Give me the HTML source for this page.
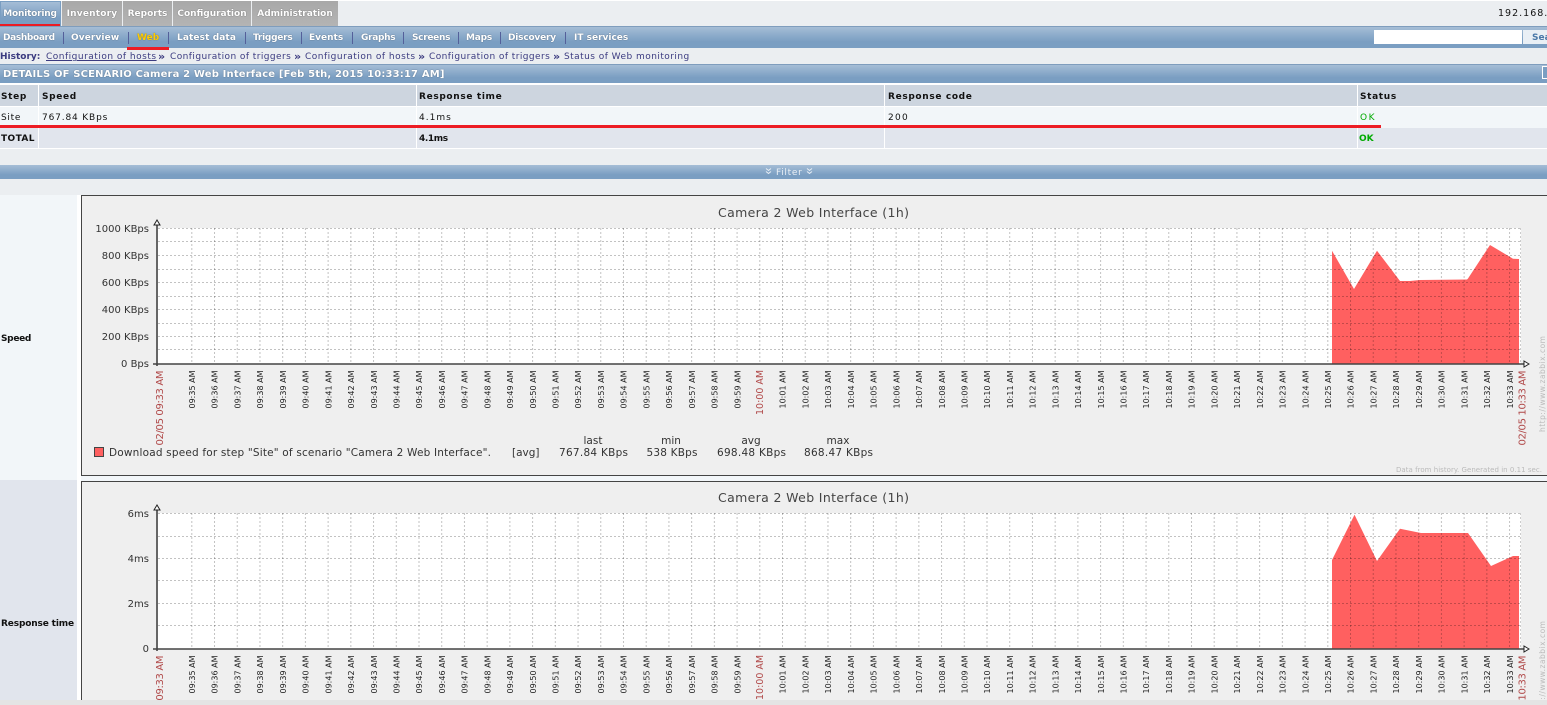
<!DOCTYPE html>
<html><head><meta charset="utf-8"><title>Details of scenario</title>
<style>
html,body{margin:0;padding:0;width:1547px;height:705px;overflow:hidden;background:#ebeef1;font-family:"DejaVu Sans","Liberation Sans",sans-serif;font-size:9px;color:#111}
div,span,a{position:absolute;white-space:nowrap}
.g{background:linear-gradient(#a5bdd6,#7a9ec2 70%)}
.tab{top:2px;height:24px;background:linear-gradient(#a8a8a8,#b4b4b4);color:#fff;font-weight:bold;line-height:24px;font-size:9px;text-align:center;box-sizing:border-box;text-shadow:0 0 1px #555}
.n{top:27px;line-height:23px;color:#fff;font-weight:bold;font-size:9px;text-shadow:0 0 1px #456}
.s{top:32px;width:1px;height:12px;background:#54609a}
.h{top:49px;line-height:17px;color:#3b3b80;font-size:9px;letter-spacing:.43px}
.c{line-height:20px;font-size:9px}
.b{font-weight:bold}
.hd{letter-spacing:.65px}
svg.ch{position:absolute;left:0;top:0;filter:blur(.3px)}
svg text{font-family:"DejaVu Sans","Liberation Sans",sans-serif;fill:#333}
.t text{font-size:8px;fill:#222}
.r{fill:#b04848!important}
</style></head><body>
<div style="left:0;top:0;width:1547px;height:1px;background:#fff"></div>
<div class="g" style="left:0;top:1px;width:61px;height:25px;border:1px solid #7a9ec2;box-sizing:border-box"></div>
<div class="tab" style="left:0;width:60px;background:none;text-shadow:0 0 1px #345;letter-spacing:-.2px">Monitoring</div>
<div style="left:0;top:24px;width:60px;height:2px;background:#ed1c24"></div>
<div class="tab" style="left:62px;top:1px;height:25px;line-height:26px;width:60px;letter-spacing:.2px">Inventory</div>
<div class="tab" style="left:123px;top:1px;height:25px;line-height:26px;width:49px">Reports</div>
<div class="tab" style="left:173px;top:1px;height:25px;line-height:26px;width:78px">Configuration</div>
<div class="tab" style="left:252px;top:1px;height:25px;line-height:26px;width:86px">Administration</div>
<div style="left:1498px;top:8px;font-size:9.5px;letter-spacing:1px;color:#111">192.168.0</div>

<div class="g" style="left:0;top:26px;width:1547px;height:22px;border-top:1px solid #7f9dbd;box-sizing:border-box"></div>
<span class="n" style="left:3px;letter-spacing:-.35px">Dashboard</span><span class="s" style="left:63px"></span>
<span class="n" style="left:71px;letter-spacing:.1px">Overview</span><span class="s" style="left:128px"></span>
<span class="n" style="left:137px;color:#fc0">Web</span><span class="s" style="left:168px"></span>
<span class="n" style="left:177px;letter-spacing:.1px">Latest data</span><span class="s" style="left:245px"></span>
<span class="n" style="left:253px;letter-spacing:-.25px">Triggers</span><span class="s" style="left:301px"></span>
<span class="n" style="left:309px">Events</span><span class="s" style="left:352px"></span>
<span class="n" style="left:361px;letter-spacing:-.3px">Graphs</span><span class="s" style="left:403px"></span>
<span class="n" style="left:412px;letter-spacing:-.3px">Screens</span><span class="s" style="left:458px"></span>
<span class="n" style="left:466px;letter-spacing:-.2px">Maps</span><span class="s" style="left:500px"></span>
<span class="n" style="left:508px;letter-spacing:-.2px">Discovery</span><span class="s" style="left:565px"></span>
<span class="n" style="left:574px">IT services</span>
<div style="left:127px;top:47px;width:42px;height:3px;background:#ed1c24"></div>
<div style="left:1374px;top:30px;width:148px;height:14px;background:#fff"></div>
<div style="left:1523px;top:30px;width:24px;height:14px;background:#e9eff5;color:#4a78a8;font-weight:bold;line-height:16px;text-indent:9px;font-size:9px;overflow:hidden">Search</div>

<span class="h b" style="left:0;letter-spacing:0">History:</span>
<span class="h" style="left:46px;text-decoration:underline;letter-spacing:.5px">Configuration of hosts</span>
<span class="h b" style="left:158px;font-size:11px;top:48px">»</span>
<span class="h" style="left:170px">Configuration of triggers</span>
<span class="h b" style="left:294px;font-size:11px;top:48px">»</span>
<span class="h" style="left:305px;letter-spacing:.5px">Configuration of hosts</span>
<span class="h b" style="left:418px;font-size:11px;top:48px">»</span>
<span class="h" style="left:429px">Configuration of triggers</span>
<span class="h b" style="left:553px;font-size:11px;top:48px">»</span>
<span class="h" style="left:564px;letter-spacing:.46px">Status of Web monitoring</span>

<div class="g" style="left:0;top:64px;width:1547px;height:19px;border-top:1px solid #7f9dbd;box-sizing:border-box"></div>
<span style="left:3px;top:65px;line-height:19px;color:#fff;font-size:10px;font-weight:bold;letter-spacing:.16px;text-shadow:0 0 1px #456">DETAILS OF SCENARIO Camera 2 Web Interface [Feb 5th, 2015 10:33:17 AM]</span>
<div style="left:1542px;top:66px;width:5px;height:13px;border:1px solid #fff;border-right:0;box-sizing:border-box;background:#7a9ec2"></div>

<div style="left:0;top:83px;width:1547px;height:2px;background:#fff"></div>
<div style="left:0;top:85px;width:1547px;height:21px;background:#cdd5df"></div>
<div style="left:0;top:106px;width:1547px;height:22px;background:#f2f6f9;border-top:1px solid #fff;box-sizing:border-box"></div>
<div style="left:0;top:128px;width:1547px;height:20px;background:#e1e5ed"></div>
<div style="left:0;top:148px;width:1547px;height:1px;background:#fff"></div>
<div style="left:38px;top:85px;width:1px;height:63px;background:#fff"></div>
<div style="left:416px;top:85px;width:1px;height:63px;background:#fff"></div>
<div style="left:884px;top:85px;width:1px;height:63px;background:#fff"></div>
<div style="left:1357px;top:85px;width:1px;height:63px;background:#fff"></div>

<span class="c b hd" style="left:1px;top:87px">Step</span>
<span class="c b hd" style="left:42px;top:87px">Speed</span>
<span class="c b hd" style="left:419px;top:87px">Response time</span>
<span class="c b hd" style="left:888px;top:87px">Response code</span>
<span class="c b hd" style="left:1360px;top:87px">Status</span>
<span class="c" style="left:1px;top:108px;letter-spacing:.7px">Site</span>
<span class="c" style="left:42px;top:108px;letter-spacing:.85px">767.84 KBps</span>
<span class="c" style="left:419px;top:108px;letter-spacing:1px">4.1ms</span>
<span class="c" style="left:888px;top:108px;letter-spacing:1.3px">200</span>
<span class="c" style="left:1360px;top:108px;color:#0a0;letter-spacing:1.5px">OK</span>
<span class="c b" style="left:1px;top:129px;letter-spacing:.4px">TOTAL</span>
<span class="c b" style="left:419px;top:129px;letter-spacing:-.4px">4.1ms</span>
<span class="c b" style="left:1359px;top:129px;color:#0a0">OK</span>
<div style="left:0;top:125px;width:1381px;height:3px;background:#ed1c24"></div>

<div class="g" style="left:0;top:165px;width:1547px;height:14px"></div>
<span style="left:776px;top:166px;line-height:14px;color:#e8eef5;font-size:9px;letter-spacing:.7px">Filter</span>
<svg width="1547" height="705" style="position:absolute;left:0;top:0"><path d="M766 168.500L768.500 170.500L771 168.500M766 171.500L768.500 173.500L771 171.500M807 168.500L809.500 170.500L812 168.500M807 171.500L809.500 173.500L812 171.500" stroke="#e8eef5" fill="none"/></svg>

<div style="left:0;top:195px;width:1547px;height:285px;background:#f2f6f9"></div>
<div style="left:0;top:480px;width:77px;height:220px;background:#e1e5ed"></div>
<div style="left:77px;top:480px;width:1470px;height:220px;background:#f2f6f9"></div>
<div style="left:77px;top:195px;width:4px;height:505px;background:#fff"></div>
<div style="left:81px;top:195px;width:1466px;height:281px;background:#efefef;border:1px solid #444;border-right:0;box-sizing:border-box"></div>
<div style="left:81px;top:481px;width:1466px;height:219px;background:#efefef;border:1px solid #444;border-bottom:0;border-right:0;box-sizing:border-box"></div>
<span class="b" style="left:1px;top:334px;font-size:9px;line-height:11px;letter-spacing:-.3px">Speed</span>
<span class="b" style="left:1px;top:619px;font-size:9px;line-height:11px;letter-spacing:-.15px">Response time</span>

<svg class="ch" width="1547" height="705" viewBox="0 0 1547 705">
<defs>
<pattern id="v" x="191.3" y="228" width="22.72" height="136" patternUnits="userSpaceOnUse"><path d="M.5 0V136" stroke="#000" stroke-opacity=".24" stroke-dasharray="2 2" fill="none"/></pattern>
</defs>
<!-- chart 1 -->
<rect x="158" y="228" width="1363" height="136" fill="#fff"/>
<path d="M1332 364V250.700L1354 289L1377 250.700L1400 281L1410 281L1420 280L1467 279.500L1468 278.500L1490 245L1513 258.700L1519 259V364Z" fill="#ff6060"/>
<rect x="191" y="228" width="1330" height="136" fill="url(#v)"/>
<path d="M158 228.500H1521M158 241.500H1521M158 255.500H1521M158 269.500H1521M158 282.500H1521M158 296.500H1521M158 309.500H1521M158 323.500H1521M158 336.500H1521M158 349.500H1521" stroke="#000" stroke-opacity=".24" stroke-dasharray="2 2" fill="none"/>
<path d="M1520.500 228V364" stroke="#000" stroke-opacity=".2" stroke-dasharray="2 2"/>
<path d="M157 224V366" stroke="#666" stroke-width="2"/>
<path d="M153 364H1525" stroke="#444" stroke-width="1.500"/>
<path d="M157 220L154 225H160Z" fill="#fff" stroke="#222"/>
<path d="M1529 364L1524 361V367Z" fill="#fff" stroke="#222"/>
<text x="813.500" y="217" font-size="12.500" text-anchor="middle" textLength="191" style="fill:#444">Camera 2 Web Interface (1h)</text>
<g font-size="10" text-anchor="end">
<text x="149" y="232">1000 KBps</text><text x="149" y="259">800 KBps</text><text x="149" y="286">600 KBps</text><text x="149" y="313">400 KBps</text><text x="149" y="340">200 KBps</text><text x="149" y="367">0 Bps</text>
</g>
<g class="t">
<text transform="translate(195 408.500)rotate(-90)">09:35 AM</text><text transform="translate(217.700 408.500)rotate(-90)">09:36 AM</text><text transform="translate(240.400 408.500)rotate(-90)">09:37 AM</text><text transform="translate(263.200 408.500)rotate(-90)">09:38 AM</text><text transform="translate(285.900 408.500)rotate(-90)">09:39 AM</text><text transform="translate(308.600 408.500)rotate(-90)">09:40 AM</text><text transform="translate(331.300 408.500)rotate(-90)">09:41 AM</text><text transform="translate(354 408.500)rotate(-90)">09:42 AM</text><text transform="translate(376.800 408.500)rotate(-90)">09:43 AM</text><text transform="translate(399.500 408.500)rotate(-90)">09:44 AM</text><text transform="translate(422.200 408.500)rotate(-90)">09:45 AM</text><text transform="translate(444.900 408.500)rotate(-90)">09:46 AM</text><text transform="translate(467.600 408.500)rotate(-90)">09:47 AM</text><text transform="translate(490.400 408.500)rotate(-90)">09:48 AM</text><text transform="translate(513.100 408.500)rotate(-90)">09:49 AM</text><text transform="translate(535.800 408.500)rotate(-90)">09:50 AM</text><text transform="translate(558.500 408.500)rotate(-90)">09:51 AM</text><text transform="translate(581.200 408.500)rotate(-90)">09:52 AM</text><text transform="translate(604 408.500)rotate(-90)">09:53 AM</text><text transform="translate(626.700 408.500)rotate(-90)">09:54 AM</text><text transform="translate(649.400 408.500)rotate(-90)">09:55 AM</text><text transform="translate(672.100 408.500)rotate(-90)">09:56 AM</text><text transform="translate(694.800 408.500)rotate(-90)">09:57 AM</text><text transform="translate(717.600 408.500)rotate(-90)">09:58 AM</text><text transform="translate(740.300 408.500)rotate(-90)">09:59 AM</text><text class="r" style="font-size:9.500px" transform="translate(763 415)rotate(-90)">10:00 AM</text><text transform="translate(785.700 408.500)rotate(-90)">10:01 AM</text><text transform="translate(808.400 408.500)rotate(-90)">10:02 AM</text><text transform="translate(831.200 408.500)rotate(-90)">10:03 AM</text><text transform="translate(853.900 408.500)rotate(-90)">10:04 AM</text><text transform="translate(876.600 408.500)rotate(-90)">10:05 AM</text><text transform="translate(899.300 408.500)rotate(-90)">10:06 AM</text><text transform="translate(922 408.500)rotate(-90)">10:07 AM</text><text transform="translate(944.800 408.500)rotate(-90)">10:08 AM</text><text transform="translate(967.500 408.500)rotate(-90)">10:09 AM</text><text transform="translate(990.200 408.500)rotate(-90)">10:10 AM</text><text transform="translate(1012.900 408.500)rotate(-90)">10:11 AM</text><text transform="translate(1035.600 408.500)rotate(-90)">10:12 AM</text><text transform="translate(1058.400 408.500)rotate(-90)">10:13 AM</text><text transform="translate(1081.100 408.500)rotate(-90)">10:14 AM</text><text transform="translate(1103.800 408.500)rotate(-90)">10:15 AM</text><text transform="translate(1126.500 408.500)rotate(-90)">10:16 AM</text><text transform="translate(1149.200 408.500)rotate(-90)">10:17 AM</text><text transform="translate(1172 408.500)rotate(-90)">10:18 AM</text><text transform="translate(1194.700 408.500)rotate(-90)">10:19 AM</text><text transform="translate(1217.400 408.500)rotate(-90)">10:20 AM</text><text transform="translate(1240.100 408.500)rotate(-90)">10:21 AM</text><text transform="translate(1262.800 408.500)rotate(-90)">10:22 AM</text><text transform="translate(1285.600 408.500)rotate(-90)">10:23 AM</text><text transform="translate(1308.300 408.500)rotate(-90)">10:24 AM</text><text transform="translate(1331 408.500)rotate(-90)">10:25 AM</text><text transform="translate(1353.700 408.500)rotate(-90)">10:26 AM</text><text transform="translate(1376.400 408.500)rotate(-90)">10:27 AM</text><text transform="translate(1399.200 408.500)rotate(-90)">10:28 AM</text><text transform="translate(1421.900 408.500)rotate(-90)">10:29 AM</text><text transform="translate(1444.600 408.500)rotate(-90)">10:30 AM</text><text transform="translate(1467.300 408.500)rotate(-90)">10:31 AM</text><text transform="translate(1490 408.500)rotate(-90)">10:32 AM</text><text transform="translate(1512.800 408.500)rotate(-90)">10:33 AM</text>
</g>
<text class="r" font-size="10" textLength="75" transform="translate(163 445.500)rotate(-90)">02/05 09:33 AM</text>
<text class="r" font-size="10" textLength="75" transform="translate(1525.500 445.500)rotate(-90)">02/05 10:33 AM</text>
<text font-size="7.500" style="fill:#bbb" textLength="96" transform="translate(1545 432)rotate(-90)">http://www.zabbix.com</text>
<rect x="94.500" y="447.500" width="9" height="9" fill="#ff6060" stroke="#444"/>
<g font-size="10.500">
<text x="109" y="456" textLength="382">Download speed for step "Site" of scenario "Camera 2 Web Interface".</text>
<text x="512" y="456">[avg]</text>
<text x="593" y="444" text-anchor="middle">last</text><text x="559" y="456" textLength="69">767.84 KBps</text>
<text x="671" y="444" text-anchor="middle">min</text><text x="646.500" y="456" textLength="51">538 KBps</text>
<text x="751" y="444" text-anchor="middle">avg</text><text x="717" y="456" textLength="69">698.48 KBps</text>
<text x="838" y="444" text-anchor="middle">max</text><text x="804" y="456" textLength="69">868.47 KBps</text>
</g>
<text x="1396" y="472" font-size="7" style="fill:#bbb" textLength="146">Data from history. Generated in 0.11 sec.</text>

<!-- chart 2 -->
<rect x="158" y="513" width="1363" height="136" fill="#fff"/>
<path d="M1332 649V560L1354.500 514.700L1377 561L1400 528.700L1421 533L1468 533L1491 566L1513 556L1519 556V649Z" fill="#ff6060"/>
<g transform="translate(0 285)"><rect x="191" y="228" width="1330" height="136" fill="url(#v)"/></g>
<path d="M158 513.500H1521M158 536.500H1521M158 558.500H1521M158 580.500H1521M158 603.500H1521M158 625.500H1521" stroke="#000" stroke-opacity=".24" stroke-dasharray="2 2" fill="none"/>
<path d="M1520.500 513V649" stroke="#000" stroke-opacity=".2" stroke-dasharray="2 2"/>
<path d="M157 509V651" stroke="#666" stroke-width="2"/>
<path d="M153 649H1525" stroke="#444" stroke-width="1.500"/>
<path d="M157 505L154 510H160Z" fill="#fff" stroke="#222"/>
<path d="M1529 649L1524 646V652Z" fill="#fff" stroke="#222"/>
<text x="813.500" y="502" font-size="12.500" text-anchor="middle" textLength="191" style="fill:#444">Camera 2 Web Interface (1h)</text>
<g font-size="10" text-anchor="end">
<text x="149" y="517">6ms</text><text x="149" y="562">4ms</text><text x="149" y="607">2ms</text><text x="149" y="652">0</text>
</g>
<g class="t">
<text transform="translate(195 693.500)rotate(-90)">09:35 AM</text><text transform="translate(217.700 693.500)rotate(-90)">09:36 AM</text><text transform="translate(240.400 693.500)rotate(-90)">09:37 AM</text><text transform="translate(263.200 693.500)rotate(-90)">09:38 AM</text><text transform="translate(285.900 693.500)rotate(-90)">09:39 AM</text><text transform="translate(308.600 693.500)rotate(-90)">09:40 AM</text><text transform="translate(331.300 693.500)rotate(-90)">09:41 AM</text><text transform="translate(354 693.500)rotate(-90)">09:42 AM</text><text transform="translate(376.800 693.500)rotate(-90)">09:43 AM</text><text transform="translate(399.500 693.500)rotate(-90)">09:44 AM</text><text transform="translate(422.200 693.500)rotate(-90)">09:45 AM</text><text transform="translate(444.900 693.500)rotate(-90)">09:46 AM</text><text transform="translate(467.600 693.500)rotate(-90)">09:47 AM</text><text transform="translate(490.400 693.500)rotate(-90)">09:48 AM</text><text transform="translate(513.100 693.500)rotate(-90)">09:49 AM</text><text transform="translate(535.800 693.500)rotate(-90)">09:50 AM</text><text transform="translate(558.500 693.500)rotate(-90)">09:51 AM</text><text transform="translate(581.200 693.500)rotate(-90)">09:52 AM</text><text transform="translate(604 693.500)rotate(-90)">09:53 AM</text><text transform="translate(626.700 693.500)rotate(-90)">09:54 AM</text><text transform="translate(649.400 693.500)rotate(-90)">09:55 AM</text><text transform="translate(672.100 693.500)rotate(-90)">09:56 AM</text><text transform="translate(694.800 693.500)rotate(-90)">09:57 AM</text><text transform="translate(717.600 693.500)rotate(-90)">09:58 AM</text><text transform="translate(740.300 693.500)rotate(-90)">09:59 AM</text><text class="r" style="font-size:9.500px" transform="translate(763 700)rotate(-90)">10:00 AM</text><text transform="translate(785.700 693.500)rotate(-90)">10:01 AM</text><text transform="translate(808.400 693.500)rotate(-90)">10:02 AM</text><text transform="translate(831.200 693.500)rotate(-90)">10:03 AM</text><text transform="translate(853.900 693.500)rotate(-90)">10:04 AM</text><text transform="translate(876.600 693.500)rotate(-90)">10:05 AM</text><text transform="translate(899.300 693.500)rotate(-90)">10:06 AM</text><text transform="translate(922 693.500)rotate(-90)">10:07 AM</text><text transform="translate(944.800 693.500)rotate(-90)">10:08 AM</text><text transform="translate(967.500 693.500)rotate(-90)">10:09 AM</text><text transform="translate(990.200 693.500)rotate(-90)">10:10 AM</text><text transform="translate(1012.900 693.500)rotate(-90)">10:11 AM</text><text transform="translate(1035.600 693.500)rotate(-90)">10:12 AM</text><text transform="translate(1058.400 693.500)rotate(-90)">10:13 AM</text><text transform="translate(1081.100 693.500)rotate(-90)">10:14 AM</text><text transform="translate(1103.800 693.500)rotate(-90)">10:15 AM</text><text transform="translate(1126.500 693.500)rotate(-90)">10:16 AM</text><text transform="translate(1149.200 693.500)rotate(-90)">10:17 AM</text><text transform="translate(1172 693.500)rotate(-90)">10:18 AM</text><text transform="translate(1194.700 693.500)rotate(-90)">10:19 AM</text><text transform="translate(1217.400 693.500)rotate(-90)">10:20 AM</text><text transform="translate(1240.100 693.500)rotate(-90)">10:21 AM</text><text transform="translate(1262.800 693.500)rotate(-90)">10:22 AM</text><text transform="translate(1285.600 693.500)rotate(-90)">10:23 AM</text><text transform="translate(1308.300 693.500)rotate(-90)">10:24 AM</text><text transform="translate(1331 693.500)rotate(-90)">10:25 AM</text><text transform="translate(1353.700 693.500)rotate(-90)">10:26 AM</text><text transform="translate(1376.400 693.500)rotate(-90)">10:27 AM</text><text transform="translate(1399.200 693.500)rotate(-90)">10:28 AM</text><text transform="translate(1421.900 693.500)rotate(-90)">10:29 AM</text><text transform="translate(1444.600 693.500)rotate(-90)">10:30 AM</text><text transform="translate(1467.300 693.500)rotate(-90)">10:31 AM</text><text transform="translate(1490 693.500)rotate(-90)">10:32 AM</text><text transform="translate(1512.800 693.500)rotate(-90)">10:33 AM</text>
</g>
<text class="r" font-size="10" textLength="75" transform="translate(163 730.500)rotate(-90)">02/05 09:33 AM</text>
<text class="r" font-size="10" textLength="75" transform="translate(1525.500 730.500)rotate(-90)">02/05 10:33 AM</text>
<text font-size="7.500" style="fill:#bbb" textLength="96" transform="translate(1545 717)rotate(-90)">http://www.zabbix.com</text>
</svg>
<div style="left:0;top:700px;width:1547px;height:5px;background:#e4e4e4"></div>
</body></html>
